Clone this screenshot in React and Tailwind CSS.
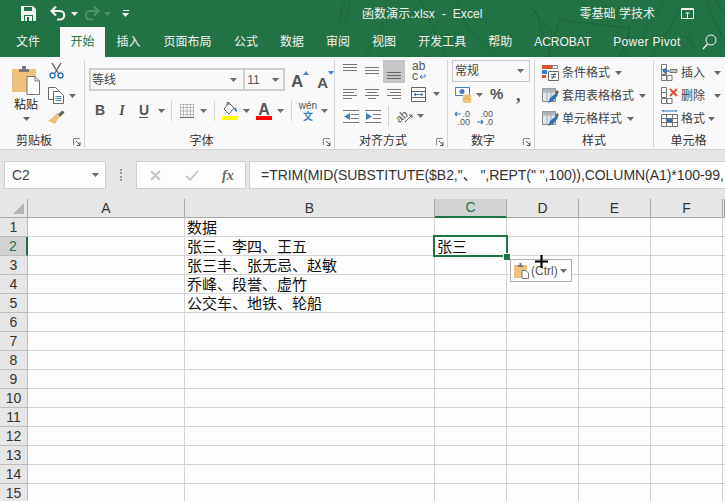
const cjk = "font-['Liberation_Sans','Noto_Sans_CJK_SC',sans-serif]";

const Caret = ({ className = "text-[#6a6a6a]" }) => (
  <svg width="7" height="4" viewBox="0 0 7 4" className={`shrink-0 ${className}`}>
    <path d="M0 0h7L3.5 4z" fill="currentColor" />
  </svg>
);

const Launcher = () => (
  <svg width="8" height="8" viewBox="0 0 8 8" className="shrink-0">
    <path d="M0.5 7V0.5H7" fill="none" stroke="#8a8a8a" />
    <path d="M3 3l4 4M7 4v3.5H4" fill="none" stroke="#555" />
  </svg>
);

const Lines = ({ rows, w = 14, active }) => (
  <svg width={w} height="16" viewBox={`0 0 ${w} 16`}>
    {rows.map(([y, x1, x2]) => (
      <path key={y} d={`M${x1} ${y}.5H${x2}`} stroke={active ? "#666" : "#777"} />
    ))}
  </svg>
);

const Save = () => (
  <svg width="15" height="15" viewBox="0 0 15 15">
    <path d="M0 0h12l3 3v12H0z" fill="#f2f2f2" />
    <path d="M3 1h8v4H3z" fill="#217346" />
    <path d="M3 9h9v6H3z" fill="#217346" />
    <path d="M4 10h7v5H4z" fill="#f2f2f2" />
    <path d="M6 11h2v4H6z" fill="#217346" />
  </svg>
);

const Undo = ({ flip, color }) => (
  <svg width="16" height="15" viewBox="0 0 16 15" className={flip ? "-scale-x-100" : ""}>
    <path d="M2 5h8a4.2 4.2 0 0 1 0 8.5H7" fill="none" stroke={color} strokeWidth="2.2" />
    <path d="M6 0.5L1.5 5 6 9.5" fill="none" stroke={color} strokeWidth="2.2" />
  </svg>
);

const Doodle = () => (
  <svg width="725" height="57" viewBox="0 0 725 57" className="absolute left-0 top-0" fill="none" stroke="#1b663d" strokeWidth="1">
    <path d="M345 2c-3 6-5 12-5 16 0 4 5 4 6 0l4-14" />
    <path d="M420 0l26 57M455 0l14 30M525 0l28 34M535 10l16 47M560 20l70 8 -10 29M560 20l-12 37" />
    <path d="M630 28l-5 29M665 0l-30 48M680 10l-28 47M705 0l20 42" />
    <path d="M685 36c4 4 5 8 6 11 1 3 4 2 3-1l-6-11" />
    <path d="M470 30l30 27M385 25l-20 32M600 0l18 20M715 0l10 14" />
  </svg>
);

const Tab = ({ children, className = "px-[11px] text-[#f2f2f2]" }) => (
  <div className={`h-[30px] flex items-center whitespace-nowrap ${className}`}>
    {children}
  </div>
);

const Header = () => (
  <div className={`relative h-[57px] bg-[#217346] overflow-hidden ${cjk}`}>
    <Doodle />
    <div className="relative h-[27px] flex items-center text-[#f2f2f2] text-[12px]">
      <div className="ml-[21px]"><Save /></div>
      <div className="ml-[14px]"><Undo color="#f2f2f2" /></div>
      <div className="ml-[5px]"><Caret className="text-[#f2f2f2]" /></div>
      <div className="ml-[6px]"><Undo flip color="#4c9068" /></div>
      <div className="ml-[4px]"><Caret className="text-[#4c9068]" /></div>
      <div className="ml-[11px] flex flex-col items-center gap-[2px]">
        <div className="w-[6px] h-px bg-[#f2f2f2]" />
        <Caret className="text-[#f2f2f2]" />
      </div>
      <div className="ml-[233px] whitespace-nowrap tracking-[0.1px]">函数演示.xlsx&nbsp;&nbsp;-&nbsp;&nbsp;Excel</div>
      <div className="ml-[97px] whitespace-nowrap">零基础 学技术</div>
      <svg width="13" height="12" viewBox="0 0 13 12" className="ml-[26px]">
        <path d="M.5.500h12v10H.5z" fill="none" stroke="#f2f2f2" />
        <path d="M.5 1.500h12" stroke="#f2f2f2" />
        <path d="M6.500 10V4M4.500 6l2-2 2 2" fill="none" stroke="#f2f2f2" />
      </svg>
    </div>
    <div className="relative h-[30px] flex items-center text-[12px] pl-[5px]">
      <Tab>文件</Tab>
      <div className="w-[9px]" />
      <Tab className="px-[10.5px] bg-[#f9f9f9] text-[#217346]">开始</Tab>
      <Tab className="px-[11.5px] text-[#f2f2f2]">插入</Tab>
      <Tab className="px-[11.5px] text-[#f2f2f2]">页面布局</Tab>
      <Tab>公式</Tab>
      <Tab>数据</Tab>
      <Tab>审阅</Tab>
      <Tab>视图</Tab>
      <Tab>开发工具</Tab>
      <Tab>帮助</Tab>
      <Tab>ACROBAT</Tab>
      <Tab className="px-[11px] text-[#f2f2f2] tracking-[0.3px]">Power Pivot</Tab>
      <svg width="15" height="16" viewBox="0 0 15 16" className="ml-[10px]">
        <circle cx="9" cy="6" r="5" fill="none" stroke="#f2f2f2" />
        <path d="M5.500 10L1 15" stroke="#f2f2f2" strokeWidth="1.4" />
      </svg>
    </div>
  </div>
);

const Group = ({ width, label, launcher, children }) => (
  <div className={`${width} h-[88px] shrink-0 border-r border-[#d4d4d4] flex flex-col`}>
    <div className="h-[74px]">{children}</div>
    <div className={`relative h-[14px] flex items-center justify-center text-[12px] text-[#333] ${launcher ? "pr-[16px]" : ""}`}>
      {label}
      {launcher && <div className="absolute right-[3px] top-[4px]"><Launcher /></div>}
    </div>
  </div>
);

const VSep = () => <div className="w-px h-[20px] bg-[#d4d4d4] shrink-0" />;

const Clipboard = () => (
  <div className="flex">
    <div className="ml-[12px] w-[28px] flex flex-col items-center">
      <svg width="28" height="30" viewBox="0 0 28 30" className="mt-[6px]">
        <path d="M1 3h22a1 1 0 0 1 1 1v22H1a1 1 0 0 1-1-1V4a1 1 0 0 1 1-1z" fill="#edc27f" />
        <path d="M7 3h3V0h4v3h3v3H7z" fill="#777" />
        <path d="M15 10.500h8l4.500 4.500v13.500H15z" fill="#fff" stroke="#777" />
        <path d="M23 10.500v4.500h4.500" fill="none" stroke="#777" />
      </svg>
      <div className="mt-[1px] text-[12px] leading-[16px] text-[#222] whitespace-nowrap">粘贴</div>
      <div className="mt-[4px]"><Caret /></div>
    </div>
    <div className="ml-[8px] flex flex-col items-start">
      <svg width="15" height="16" viewBox="0 0 15 16" className="mt-[3px] ml-[1px]">
        <path d="M3 0l6 10M12 0L6 10" stroke="#666" strokeWidth="1.4" />
        <circle cx="3.500" cy="12.500" r="2.500" fill="none" stroke="#2f72b5" strokeWidth="1.400" />
        <circle cx="11.500" cy="12.500" r="2.500" fill="none" stroke="#2f72b5" strokeWidth="1.400" />
      </svg>
      <div className="mt-[8px] flex items-center">
        <svg width="16" height="17" viewBox="0 0 16 17">
          <path d="M.5.500h7l3 3v9H.5z" fill="#fff" stroke="#666" />
          <path d="M5.500 4.500h6l4 4v8h-10z" fill="#fff" stroke="#666" />
          <path d="M7.500 9.500h6M7.500 11.500h6M7.500 13.500h6" stroke="#4a86bd" />
        </svg>
        <div className="ml-[5px]"><Caret /></div>
      </div>
      <svg width="17" height="15" viewBox="0 0 17 15" className="mt-[6px]">
        <path d="M9 3l3 3-5 8-7-3 4-3z" fill="#edc27f" />
        <path d="M10 4L14.500 .5l2 2L12 7z" fill="#666" />
      </svg>
    </div>
  </div>
);

const GrowA = ({ up }) => (
  <div className="flex items-start">
    <span className={`font-['Liberation_Sans',sans-serif] text-[#555] font-bold leading-none ${up ? "text-[17px] mt-[3px]" : "text-[15px] mt-[5px]"}`}>A</span>
    <svg width="6" height="4" viewBox="0 0 6 4" className="mt-[1px]">
      <path d={up ? "M0 4h6L3 0z" : "M0 0h6L3 4z"} fill="#4a86bd" />
    </svg>
  </div>
);

const Font = () => (
  <div className="flex flex-col">
    <div className="mt-[8px] flex items-center">
      <div className="ml-[4px] w-[157px] h-[23px] border-2 border-r border-[#cfcfcf] flex items-center justify-between pl-[1px] pr-[6px] text-[12px] text-[#444]">
        等线 <Caret />
      </div>
      <div className="w-[41px] h-[23px] border-2 border-l border-[#cfcfcf] flex items-center justify-between pl-[2px] pr-[4px] text-[12px] text-[#555]">
        11 <Caret />
      </div>
      <div className="ml-[6px]"><GrowA up /></div>
      <div className="ml-[8px]"><GrowA /></div>
    </div>
    <div className="mt-[9px] h-[21px] flex items-center font-['Liberation_Sans',sans-serif] text-[#555] text-[14px]">
      <b className="ml-[10px] w-[10px] text-center">B</b>
      <i className="ml-[13px] w-[8px] text-center font-['Liberation_Serif',serif] font-bold">I</i>
      <div className="ml-[13px] w-[9px] text-center border-b border-[#555] font-bold leading-[14px]">U</div>
      <div className="ml-[10px]"><Caret /></div>
      <div className="ml-[6px]"><VSep /></div>
      <svg width="14" height="14" viewBox="0 0 14 14" className="ml-[8px]">
        <path d="M.5.500h13v13H.5zM.5 7h13M7 .500v13M.5 3.500h13M.5 10.500h13M3.500.500v13M10.500.500v13" fill="none" stroke="#888" strokeDasharray="1 1" />
        <path d="M0 13.500h14" stroke="#666" />
      </svg>
      <div className="ml-[6px]"><Caret /></div>
      <div className="ml-[7px]"><VSep /></div>
      <div className="ml-[7px] w-[16px] flex flex-col items-center">
        <svg width="16" height="14" viewBox="0 0 16 14">
          <path d="M7 1l5 5-5 6-5-5z" fill="#fff" stroke="#666" />
          <path d="M5 3V0.500h2V3" fill="none" stroke="#666" />
          <path d="M12 6c2-1 3 1 3 3 0 1-1 1-2 0z" fill="#3f7fc0" />
        </svg>
        <div className="w-[16px] h-[4px] bg-[#ffff00]" />
      </div>
      <div className="ml-[5px]"><Caret /></div>
      <div className="ml-[6px] w-[16px] flex flex-col items-center">
        <div className="h-[14px] text-[16px] leading-[15px] font-bold text-[#555]">A</div>
        <div className="w-[16px] h-[4px] bg-[#ff0000]" />
      </div>
      <div className="ml-[5px]"><Caret /></div>
      <div className="ml-[7px]"><VSep /></div>
      <div className={`ml-[8px] w-[16px] flex flex-col items-center leading-[11px] text-[10px] ${cjk}`}>
        <span className="text-[#555] whitespace-nowrap">wén</span>
        <span className="text-[#3f7fc0] font-bold">文</span>
      </div>
      <div className="ml-[5px]"><Caret /></div>
    </div>
  </div>
);

const Align = () => (
  <div className="flex flex-col">
    <div className="h-[23px] flex items-start">
      <div className="ml-[8px] mt-[3px]"><Lines rows={[[1, 0, 14], [4, 0, 14], [7, 0, 14]]} /></div>
      <div className="ml-[8px] mt-[6px]"><Lines rows={[[1, 0, 14], [4, 0, 14], [7, 0, 14]]} /></div>
      <div className="ml-[4px] w-[22px] h-[23px] bg-[#c6c6c6] flex justify-center pt-[6px]">
        <Lines active rows={[[6, 0, 14], [9, 0, 14], [12, 0, 14]]} />
      </div>
      <div className="ml-[7px] mt-[2px] w-[14px] font-['Liberation_Sans',sans-serif] text-[#555] text-[12px] leading-[9px] flex flex-col">
        <span>ab</span>
        <span className="flex items-center mt-px">
          c
          <svg width="7" height="6" viewBox="0 0 7 6" className="ml-[1px]">
            <path d="M6 0v3H1M1 3l2-2M1 3l2 2" fill="none" stroke="#3f7fc0" />
          </svg>
        </span>
      </div>
    </div>
    <div className="h-[22px] flex items-center">
      <div className="ml-[8px]"><Lines rows={[[3, 0, 14], [6, 0, 11], [9, 0, 14], [12, 0, 9]]} /></div>
      <div className="ml-[8px]"><Lines rows={[[3, 0, 14], [6, 2, 12], [9, 0, 14], [12, 3, 11]]} /></div>
      <div className="ml-[8px]"><Lines rows={[[3, 0, 14], [6, 3, 14], [9, 0, 14], [12, 5, 14]]} /></div>
      <svg width="15" height="15" viewBox="0 0 15 15" className="ml-[10px]">
        <path d="M.5.500h14v14H.5zM.5 4.500h14M.5 10.500h14" fill="none" stroke="#666" />
        <path d="M3 7.500h9M3 7.500l2-1.500M3 7.500l2 1.500M12 7.500l-2-1.500M12 7.500l-2 1.500" fill="none" stroke="#3f7fc0" />
      </svg>
      <div className="ml-[7px]"><Caret /></div>
    </div>
    <div className="h-[22px] flex items-center">
      <svg width="16" height="13" viewBox="0 0 16 13" className="ml-[8px]">
        <path d="M0 .500h16M8 4.500h8M8 8.500h8M0 12.500h16" stroke="#777" />
        <path d="M7 3v7L1 6.500z" fill="#3f7fc0" />
      </svg>
      <svg width="16" height="13" viewBox="0 0 16 13" className="ml-[6px]">
        <path d="M0 .500h16M8 4.500h8M8 8.500h8M0 12.500h16" stroke="#777" />
        <path d="M1 3v7l6-3.500z" fill="#3f7fc0" />
      </svg>
      <div className="ml-[7px]"><VSep /></div>
      <svg width="18" height="16" viewBox="0 0 18 16" className="ml-[7px] overflow-visible">
        <text x="0" y="12" fontSize="11" fill="#555" transform="rotate(-40 6 9)" fontFamily="Liberation Sans">ab</text>
        <path d="M9 14l7-7M16 7h-3M16 7v3" fill="none" stroke="#555" />
      </svg>
      <div className="ml-[3px]"><Caret /></div>
    </div>
  </div>
);

const MoneyIcon = () => (
  <svg width="17" height="17" viewBox="0 0 17 17">
    <path d="M.5 1.500h14v8H.5z" fill="#fff" stroke="#3f7fc0" />
    <circle cx="7" cy="5.500" r="2.500" fill="#3f7fc0" />
    <ellipse cx="12" cy="10" rx="4.500" ry="1.800" fill="#edc27f" />
    <ellipse cx="12" cy="13" rx="4.500" ry="1.800" fill="#e6b25e" />
    <ellipse cx="12" cy="15.200" rx="4.500" ry="1.800" fill="#edc27f" />
  </svg>
);

const Arrow = ({ right }) => (
  <svg width="7" height="6" viewBox="0 0 7 6" className="mr-px">
    <path d={right ? "M0 3h6M6 3L4 1M6 3L4 5" : "M7 3H1M1 3l2-2M1 3l2 2"} fill="none" stroke="#3f7fc0" strokeWidth="1.200" />
  </svg>
);

const Decimal = ({ more }) => (
  <div className="w-[16px] font-['Liberation_Sans',sans-serif] text-[9px] leading-[8px] text-[#555] flex flex-col items-end">
    <span className="flex items-center">
      {!more && <Arrow />}.{more ? "00" : "0"}
    </span>
    <span className="flex items-center">
      {more && <Arrow right />}.{more ? "0" : "00"}
    </span>
  </div>
);

const NumberGroup = () => (
  <div className="flex flex-col">
    <div className="ml-[4px] w-[78px] h-[22px] border border-[#c6c6c6] flex items-center justify-between px-[2px] pr-[5px] text-[12px] text-[#444]">
      常规 <Caret />
    </div>
    <div className="mt-[3px] h-[19px] flex items-center">
      <div className="ml-[7px]"><MoneyIcon /></div>
      <div className="ml-[4px]"><Caret /></div>
      <div className="ml-[7px] w-[14px] font-['Liberation_Sans',sans-serif] text-[15px] text-[#555] font-bold">%</div>
      <div className="ml-[12px] font-['Liberation_Serif',serif] text-[18px] leading-[12px] font-bold text-[#555]">,</div>
    </div>
    <div className="mt-[6px] flex items-center">
      <div className="ml-[6px]"><Decimal /></div>
      <div className="ml-[7px]"><Decimal more /></div>
    </div>
  </div>
);

const CondIcon = () => (
  <svg width="17" height="16" viewBox="0 0 17 16">
    <path d="M0 0h10v4H0z" fill="#d9532c" />
    <path d="M10.500.500h5v3h-5z" fill="#fff" stroke="#888" />
    <path d="M0 5h5v4H0z" fill="#3f7fc0" />
    <path d="M0 10h4v3H0z" fill="#d9532c" />
    <path d="M6.500 6.500h10v9h-10z" fill="#fff" stroke="#666" />
    <path d="M9 9.500h5M9 12h5M13 8l-3 6" stroke="#555" fill="none" />
  </svg>
);

const TableIcon = () => (
  <svg width="17" height="16" viewBox="0 0 17 16">
    <path d="M.5.500h13v13H.5z" fill="#dfe7f1" stroke="#888" />
    <path d="M.5 4h13M5 .500v13M9 .500v13" stroke="#aaa" />
    <path d="M.5.500h13v3H.5z" fill="#aab2bb" />
    <path d="M6 15l2-5 6-5 2 2-5 6z" fill="#2f72b5" />
    <path d="M13 5l2-3 2 2-2 3z" fill="#666" />
  </svg>
);

const StyleRow = ({ icon, children, caret = "ml-[5px]" }) => (
  <div className="h-[23px] flex items-center pl-[7px] text-[12px] text-[#444] whitespace-nowrap">
    {icon}
    <span className="ml-[3px]">{children}</span>
    <div className={caret}><Caret /></div>
  </div>
);

const Styles = () => (
  <div className="pt-px">
    <StyleRow icon={<CondIcon />}>条件格式</StyleRow>
    <StyleRow icon={<TableIcon />}>套用表格格式</StyleRow>
    <StyleRow icon={<TableIcon />}>单元格样式</StyleRow>
  </div>
);

const InsertIcon = ({ kind }) => (
  <svg width="17" height="17" viewBox="0 0 17 17">
    <path d="M.5.500h5v5h-5zM.5 5.500h5v5h-5zM.5 11.500h5v5h-5zM6 11.500h5v5H6z" fill="none" stroke="#777" />
    {kind === "insert" && (
      <>
        <path d="M9 5.500h7v3H9z" fill="#c9c9c9" stroke="#777" />
        <path d="M8 7H2M2 7l3-2.500M2 7l3 2.500" fill="none" stroke="#2f72b5" strokeWidth="1.300" />
      </>
    )}
    {kind === "delete" && <path d="M9 2l7 7M16 2L9 9" stroke="#d9532c" strokeWidth="1.800" />}
  </svg>
);

const FormatIcon = () => (
  <svg width="17" height="17" viewBox="0 0 17 17">
    <path d="M1 1h15M1 1l2-1M16 1l-2-1" fill="none" stroke="#2f72b5" />
    <path d="M.5 4.500h16v12H.5zM.5 8.500h16M.5 12.500h16M5.500 4.500v12M11.500 4.500v12" fill="none" stroke="#777" />
    <path d="M6 9h5v3H6z" fill="#2f72b5" />
  </svg>
);

const Cells = () => (
  <div className="pt-px">
    <StyleRow icon={<InsertIcon kind="insert" />} caret="ml-[9px]">插入</StyleRow>
    <StyleRow icon={<InsertIcon kind="delete" />} caret="ml-[9px]">删除</StyleRow>
    <StyleRow icon={<FormatIcon />} caret="ml-[3px]">格式</StyleRow>
  </div>
);

const Ribbon = () => (
  <div className={`h-[93px] bg-[#f9f9f9] flex pt-[3px] overflow-hidden border-b border-[#d4d4d4] ${cjk}`}>
    <Group width="w-[85px]" label="剪贴板" launcher><Clipboard /></Group>
    <Group width="w-[250px]" label="字体" launcher><Font /></Group>
    <Group width="w-[113px]" label="对齐方式" launcher><Align /></Group>
    <Group width="w-[87px]" label="数字" launcher><NumberGroup /></Group>
    <Group width="w-[119px]" label="样式"><Styles /></Group>
    <div className="w-[71px] shrink-0 flex flex-col h-[88px]">
      <div className="h-[74px]"><Cells /></div>
      <div className="h-[14px] flex items-center justify-center text-[12px] text-[#333] pr-[2px]">单元格</div>
    </div>
  </div>
);

const FormulaBar = () => (
  <div className={`h-[49px] bg-[#e6e6e6] pt-[11px] flex items-start ${cjk}`}>
    <div className="ml-[4px] w-[102px] h-[28px] bg-[#fdfdfd] border border-[#cfcfcf] flex items-center justify-between pl-[7px] pr-[6px] text-[14px] text-[#444]">
      C2
      <Caret />
    </div>
    <div className="ml-[14px] w-[3px] h-[12px] mt-[8px] border-l-2 border-dotted border-[#999]" />
    <div className="ml-[13px] w-[110px] h-[28px] bg-[#fdfdfd] border border-[#cfcfcf] flex items-center">
      <svg width="11" height="11" viewBox="0 0 11 11" className="ml-[13px]">
        <path d="M1 1l9 9M10 1l-9 9" stroke="#c4c4c4" strokeWidth="1.800" />
      </svg>
      <svg width="14" height="11" viewBox="0 0 14 11" className="ml-[24px]">
        <path d="M1 6l4 4 8-9" fill="none" stroke="#c4c4c4" strokeWidth="1.800" />
      </svg>
      <span className="ml-[23px] font-['Liberation_Serif',serif] italic font-bold text-[14px] text-[#666]">fx</span>
    </div>
    <div className="ml-[3px] flex-1 min-w-0 h-[28px] bg-[#fdfdfd] border border-r-0 border-[#cfcfcf] flex items-center pl-[11px] text-[14px] tracking-[-0.05px] text-[#333] whitespace-nowrap overflow-hidden">
      =TRIM(MID(SUBSTITUTE($B2,"、 ",REPT(" ",100)),COLUMN(A1)*100-99,
    </div>
  </div>
);

const colHead = "h-[19px] bg-[#e6e6e6] border-r border-b border-[#a8a8a8] flex items-center justify-center text-[14px]";
const rowHead = "h-[19px] bg-[#e6e6e6] border-r border-b border-[#bdbdbd] flex items-center justify-center text-[14px] text-[#333]";
const cell = "h-[19px] bg-[#fdfdfd] border-r border-b border-[#d4d4d4] pl-[2px] text-[15px] leading-[20px] text-[#111] whitespace-nowrap overflow-hidden";

const data = ["数据", "张三、李四、王五", "张三丰、张无忌、赵敏", "乔峰、段誉、虚竹", "公交车、地铁、轮船"];
const rows = Array.from({ length: 15 }, (_, i) => i + 1);

const Sheet = () => (
  <div className={`relative grid grid-cols-[28px_157px_250px_72px_72px_72px_72px_2px] ${cjk}`}>
    <div className={`${colHead} items-end justify-end pr-[3px] pb-[3px]`}>
      <div className="w-0 h-0 border-l-[11px] border-l-transparent border-b-[11px] border-b-[#b5b5b5]" />
    </div>
    <div className={`${colHead} text-[#333]`}>A</div>
    <div className={`${colHead} text-[#333]`}>B</div>
    <div className="h-[19px] bg-[#d2d2d2] border-r border-[#a8a8a8] border-b-2 border-b-[#217346] flex items-center justify-center text-[14px] text-[#217346]">C</div>
    <div className={`${colHead} text-[#333]`}>D</div>
    <div className={`${colHead} text-[#333]`}>E</div>
    <div className={`${colHead} text-[#333]`}>F</div>
    <div className={colHead} />
    {rows.map((r) => (
      <div key={r} className="contents">
        <div className={r === 2 ? "h-[19px] bg-[#d2d2d2] border-r-2 border-r-[#217346] border-b border-[#bdbdbd] flex items-center justify-center text-[14px] text-[#217346]" : rowHead}>{r}</div>
        <div className={cell} />
        <div className={cell}>{data[r - 1]}</div>
        <div className={cell}>{r === 2 ? "张三" : ""}</div>
        <div className={cell} />
        <div className={cell} />
        <div className={cell} />
        <div className={cell} />
      </div>
    ))}
    {/* selected cell */}
    <div className="absolute left-[433px] top-[36px] w-[75px] h-[22px] border-2 border-[#217346]" />
    <div className="absolute left-[503px] top-[54px] w-[6px] h-[6px] bg-[#217346] border border-[#fdfdfd] box-content" />
    {/* paste options */}
    <div className="absolute left-[510px] top-[60px] w-[62px] h-[23px] bg-[#fdfdfd] border border-[#b0b0b0] flex items-center pl-[3px] text-[12px] text-[#555]">
      <svg width="15" height="16" viewBox="0 0 15 16">
        <path d="M0 2h13v13H0z" fill="#edc27f" />
        <path d="M4 2h1.500V0h2v2H9v2H4z" fill="#777" />
        <path d="M8 7.500h4l2.500 2.500v5.500H8z" fill="#fff" stroke="#777" />
      </svg>
      <span className="ml-[2px] whitespace-nowrap">(Ctrl)</span>
      <div className="ml-[2px]"><Caret /></div>
    </div>
    {/* mouse cursor */}
    <svg width="13" height="13" viewBox="0 0 13 13" className="absolute left-[535px] top-[56px]">
      <path d="M6.500 0v13M0 6.500h13" stroke="#000" strokeWidth="2.200" />
    </svg>
  </div>
);

export default function App() {
  return (
    <div className="w-[725px] h-[501px] overflow-hidden bg-[#fdfdfd]">
      <Header />
      <Ribbon />
      <FormulaBar />
      <Sheet />
    </div>
  );
}
